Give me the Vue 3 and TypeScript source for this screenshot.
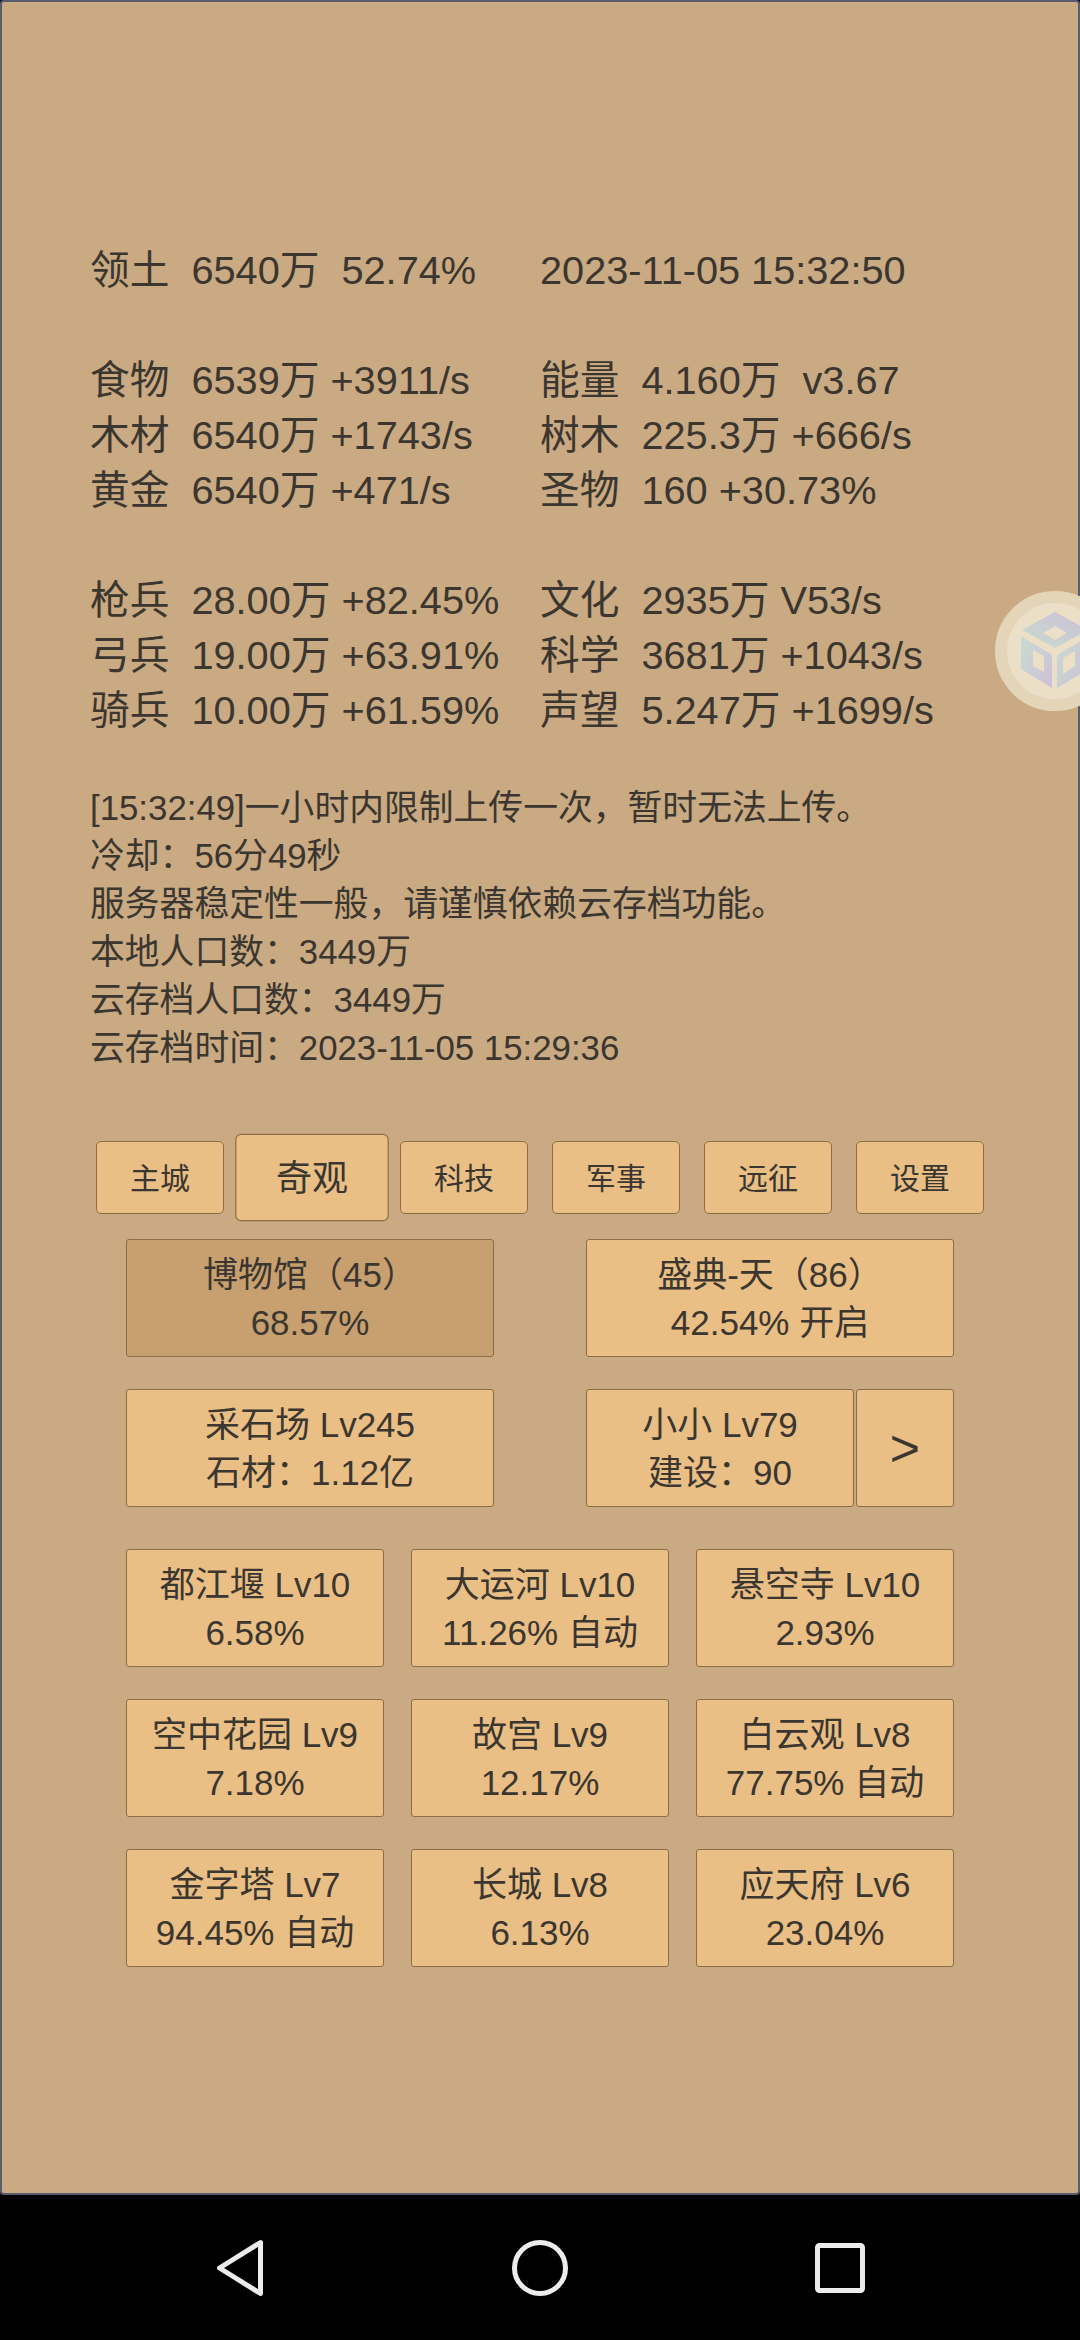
<script setup lang="ts">
interface Tile {
    title: string;
    sub: string;
}

const statRows: [string, string][] = [
    ["领土  6540万  52.74%", "2023-11-05 15:32:50"],
    ["", ""],
    ["食物  6539万 +3911/s", "能量  4.160万  v3.67"],
    ["木材  6540万 +1743/s", "树木  225.3万 +666/s"],
    ["黄金  6540万 +471/s", "圣物  160 +30.73%"],
    ["", ""],
    ["枪兵  28.00万 +82.45%", "文化  2935万 V53/s"],
    ["弓兵  19.00万 +63.91%", "科学  3681万 +1043/s"],
    ["骑兵  10.00万 +61.59%", "声望  5.247万 +1699/s"]
];

const logLines = [
    "[15:32:49]一小时内限制上传一次，暂时无法上传。",
    "冷却：56分49秒",
    "服务器稳定性一般，请谨慎依赖云存档功能。",
    "本地人口数：3449万",
    "云存档人口数：3449万",
    "云存档时间：2023-11-05 15:29:36"
];

const tabs = ["主城", "奇观", "科技", "军事", "远征", "设置"];
const activeTab = "奇观";

const wonders: Tile[] = [
    { title: "都江堰 Lv10", sub: "6.58%" },
    { title: "大运河 Lv10", sub: "11.26% 自动" },
    { title: "悬空寺 Lv10", sub: "2.93%" },
    { title: "空中花园 Lv9", sub: "7.18%" },
    { title: "故宫 Lv9", sub: "12.17%" },
    { title: "白云观 Lv8", sub: "77.75% 自动" },
    { title: "金字塔 Lv7", sub: "94.45% 自动" },
    { title: "长城 Lv8", sub: "6.13%" },
    { title: "应天府 Lv6", sub: "23.04%" }
];
</script>

<template>
    <div class="phone">
        <main class="game">
            <section class="stats">
                <template v-for="(row, i) in statRows" :key="i">
                    <div class="stat">{{ row[0] }}</div>
                    <div class="stat">{{ row[1] }}</div>
                </template>
            </section>

            <section class="log">
                <p v-for="line in logLines" :key="line">{{ line }}</p>
            </section>

            <nav class="tabs">
                <button v-for="tab in tabs" :key="tab" class="tab" :class="{ active: tab === activeTab }">
                    {{ tab }}
                </button>
            </nav>

            <section class="pair">
                <div class="tile pressed">
                    <span>博物馆（45）</span>
                    <span>68.57%</span>
                </div>
                <div class="tile">
                    <span>盛典-天（86）</span>
                    <span>42.54% 开启</span>
                </div>
            </section>

            <section class="pair">
                <div class="tile">
                    <span>采石场 Lv245</span>
                    <span>石材：1.12亿</span>
                </div>
                <div class="split">
                    <div class="tile">
                        <span>小小 Lv79</span>
                        <span>建设：90</span>
                    </div>
                    <div class="tile more">&gt;</div>
                </div>
            </section>

            <section class="wonders">
                <div v-for="w in wonders" :key="w.title" class="tile">
                    <span>{{ w.title }}</span>
                    <span>{{ w.sub }}</span>
                </div>
            </section>
        </main>

        <!-- 悬浮球 -->
        <div class="ball">
            <svg class="cube" width="100" height="92" viewBox="0 0 100 92">
                <defs>
                    <linearGradient id="cubeTop" x1="0" y1="1" x2="1" y2="0">
                        <stop offset="0" stop-color="#bcdcd2" />
                        <stop offset="1" stop-color="#bdb4dc" />
                    </linearGradient>
                    <linearGradient id="cubeSide" x1="0" y1="0" x2="1" y2="1">
                        <stop offset="0" stop-color="#bcdcd2" />
                        <stop offset="1" stop-color="#c2b4e0" />
                    </linearGradient>
                </defs>
                <path fill="url(#cubeTop)" fill-rule="evenodd" d="M36 6 69 24 36 42 3 24ZM36 20 24 27 36 34 48 27Z" />
                <path fill="url(#cubeSide)" fill-rule="evenodd" d="M2 30 33 49V82L2 63ZM14 44V60L25 66V50Z" />
                <path fill="url(#cubeSide)" fill-rule="evenodd" d="M38 49 70 30V63L38 82ZM44 52V68L56 60V45Z" />
            </svg>
        </div>

        <footer class="navbar">
            <svg width="46" height="56" viewBox="0 0 46 56">
                <path d="M43.5 2.5 2.5 28 43.5 53.5Z" fill="none" stroke="#ececec" stroke-width="5" stroke-linejoin="round" />
            </svg>
            <svg class="home" width="56" height="56" viewBox="0 0 56 56">
                <circle cx="28" cy="28" r="25.5" fill="none" stroke="#ececec" stroke-width="5" />
            </svg>
            <svg width="50" height="50" viewBox="0 0 50 50">
                <rect x="2.5" y="2.5" width="45" height="45" rx="2" fill="none" stroke="#ececec" stroke-width="5" />
            </svg>
        </footer>
    </div>
</template>

<style scoped>
.phone {
    position: relative;
    width: 1080px;
    height: 2340px;
    overflow: hidden;
    display: flex;
    flex-direction: column;
    background: #000;
    font-family: "Liberation Sans", "Noto Sans CJK SC", sans-serif;
    color: #3b362f;
}

.game {
    box-sizing: border-box;
    height: 2195px;
    padding-top: 241px;
    background: #c9aa82;
    border: 2px solid #5a5c70;
    border-radius: 4px;
}

.stats {
    display: grid;
    grid-template-columns: 450px 450px;
    padding-left: 88px;
    font-size: 39.7px;
    line-height: 55px;
}

.stat {
    height: 55px;
    white-space: pre;
}

.log {
    margin-top: 46px;
    padding-left: 88px;
    font-size: 34.8px;
    line-height: 48px;
}

.log p {
    margin: 0;
    height: 48px;
    white-space: pre;
}

.tabs {
    display: grid;
    grid-template-columns: repeat(6, 152px);
    margin-top: 69px;
    padding-left: 82px;
}

.tab {
    box-sizing: border-box;
    width: 128px;
    height: 73px;
    margin: 0 12px;
    padding: 0 0 3px;
    font: inherit;
    font-size: 30px;
    color: inherit;
    background: #e9bf85;
    border: 1px solid #8d6d48;
    border-radius: 5px;
}

.tab.active {
    transform: scale(1.2);
}

.pair {
    display: grid;
    grid-template-columns: 368px 368px;
    justify-content: space-between;
    width: 828px;
    margin: 32px 0 0 124px;
}

.tabs + .pair {
    margin-top: 25px;
}

.split {
    display: grid;
    grid-template-columns: 268px 98px;
    gap: 2px;
}

.wonders {
    display: grid;
    grid-template-columns: repeat(3, 258px);
    justify-content: space-between;
    row-gap: 32px;
    width: 828px;
    margin: 42px 0 0 124px;
}

.tile {
    box-sizing: border-box;
    height: 118px;
    padding-top: 2px;
    display: flex;
    flex-direction: column;
    align-items: center;
    justify-content: center;
    font-size: 35px;
    line-height: 48px;
    white-space: pre;
    background: #e9bf85;
    border: 1px solid #8d6d48;
    border-radius: 3px;
}

.tile.pressed {
    background: #c8a070;
}

.tile.more {
    padding-top: 0;
    font-size: 52px;
}

.ball {
    position: absolute;
    left: 995px;
    top: 591px;
    box-sizing: border-box;
    width: 120px;
    height: 120px;
    border-radius: 50%;
    border: 12px solid #e4d5b9;
    background: #ebdfc8;
}

.cube {
    position: absolute;
    left: 12px;
    top: 3px;
    opacity: 0.72;
}

.navbar {
    flex: 1;
    display: flex;
    align-items: center;
    gap: 248px;
    padding-left: 217px;
}

.home {
    margin: 0 -1px 0 1px;
}
</style>

<style>
html,
body {
    margin: 0;
    background: #000;
}
</style>
